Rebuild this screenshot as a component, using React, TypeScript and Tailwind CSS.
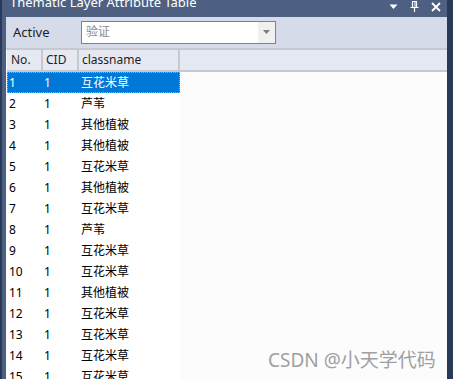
import React from "react";

const rows: [number, number, string][] = [
  [1, 1, "互花米草"],
  [2, 1, "芦苇"],
  [3, 1, "其他植被"],
  [4, 1, "其他植被"],
  [5, 1, "互花米草"],
  [6, 1, "其他植被"],
  [7, 1, "互花米草"],
  [8, 1, "芦苇"],
  [9, 1, "互花米草"],
  [10, 1, "互花米草"],
  [11, 1, "其他植被"],
  [12, 1, "互花米草"],
  [13, 1, "互花米草"],
  [14, 1, "互花米草"],
  [15, 1, "互花米草"],
];

const font = { fontFamily: '"Noto Sans", "Noto Sans CJK SC", sans-serif' };

export default function App() {
  return (
    <div
      className="w-[453px] h-[379px] overflow-hidden flex bg-[#293a58] relative text-[12px]"
      style={font}
    >
      <div className="w-[2px] bg-[#293a58] shrink-0" />
      <div className="w-[445px] flex flex-col shrink-0">
        {/* title bar */}
        <div className="h-[17px] bg-[#4d6082] flex items-start justify-between overflow-hidden shrink-0">
          <div className="text-white text-[13px] leading-[17px] mt-[-6px] ml-[8px] whitespace-nowrap">
            Thematic Layer Attribute Table
          </div>
          <div className="flex items-center gap-[12px] mr-[6px] mt-[1px]">
            <svg width="9" height="9" viewBox="0 0 9 9">
              <path d="M0.5 2.5 L8.5 2.5 L4.5 7 Z" fill="#ffffff" />
            </svg>
            <svg width="9" height="11" viewBox="0 0 9 11">
              <path d="M2 0.5 H7 M2.5 0.5 V6 M6.5 0.5 V6 M0.5 6.5 H8.5 M4.5 6.5 V11" stroke="#ffffff" strokeWidth="1.2" fill="none" />
              <path d="M5 1 V6" stroke="#ffffff" strokeWidth="1" />
            </svg>
            <svg width="10" height="10" viewBox="0 0 10 10">
              <path d="M1 1 L9 9 M9 1 L1 9" stroke="#ffffff" strokeWidth="1.8" />
            </svg>
          </div>
        </div>
        <div className="flex-1 flex flex-col border-l-[4px] border-[#4d6082]">
          {/* toolbar */}
          <div className="h-[31px] bg-[#d6dbe9] flex items-center shrink-0 pl-[7px]">
            <span className="text-[#1e1e1e] text-[13px] w-[68px]">Active</span>
            <div className="w-[195px] h-[23px] bg-white border border-[#7f8288] flex items-center mt-[-1px]">
              <span className="flex-1 pl-[4px] text-[#8a8a8a] text-[12px] leading-none">验证</span>
              <div className="w-[17px] h-full bg-[#f0f0f0] flex items-center justify-center">
                <svg width="7" height="4" viewBox="0 0 7 4">
                  <path d="M0 0 H7 L3.5 4 Z" fill="#7a7a7a" />
                </svg>
              </div>
            </div>
          </div>
          <div className="h-[2px] bg-[#c5c9d2] shrink-0" />
          {/* grid */}
          <div className="flex-1 flex flex-col bg-[#fcfcfc] pl-[1px]">
            <div className="flex h-[22px] bg-[#e6e9f2] border-b-[2px] border-[#c5c9d2] shrink-0 text-[#1e1e1e]">
              <div className="w-[36px] border-r-[2px] border-[#c5c9d2] pl-[4px] flex items-center">No.</div>
              <div className="w-[36px] border-r-[2px] border-[#c5c9d2] pl-[3px] flex items-center">CID</div>
              <div className="w-[101px] border-r-[2px] border-[#c5c9d2] pl-[3px] flex items-center">classname</div>
              <div className="flex-1" />
            </div>
            <div className="flex flex-col w-[173px] bg-white">
              {rows.map(([n, c, name], i) => (
                <div
                  key={n}
                  className={
                    i === 0
                      ? "flex h-[21px] items-center bg-[#0078d7] text-white border border-dotted border-[#f0a030] shrink-0"
                      : "flex h-[21px] items-center text-black shrink-0 border border-transparent"
                  }
                >
                  <div className="w-[36px] pl-[1px]">{n}</div>
                  <div className="w-[36px]">{c}</div>
                  <div className="flex-1 pl-[1px]">{name}</div>
                </div>
              ))}
            </div>
          </div>
        </div>
      </div>
      <div className="w-[6px] bg-[#293a58] shrink-0" />
      <div className="absolute left-[268px] top-[346px] text-[19px] text-[#a0a0a0] whitespace-nowrap" style={font}>
        CSDN @小天学代码
      </div>
    </div>
  );
}
